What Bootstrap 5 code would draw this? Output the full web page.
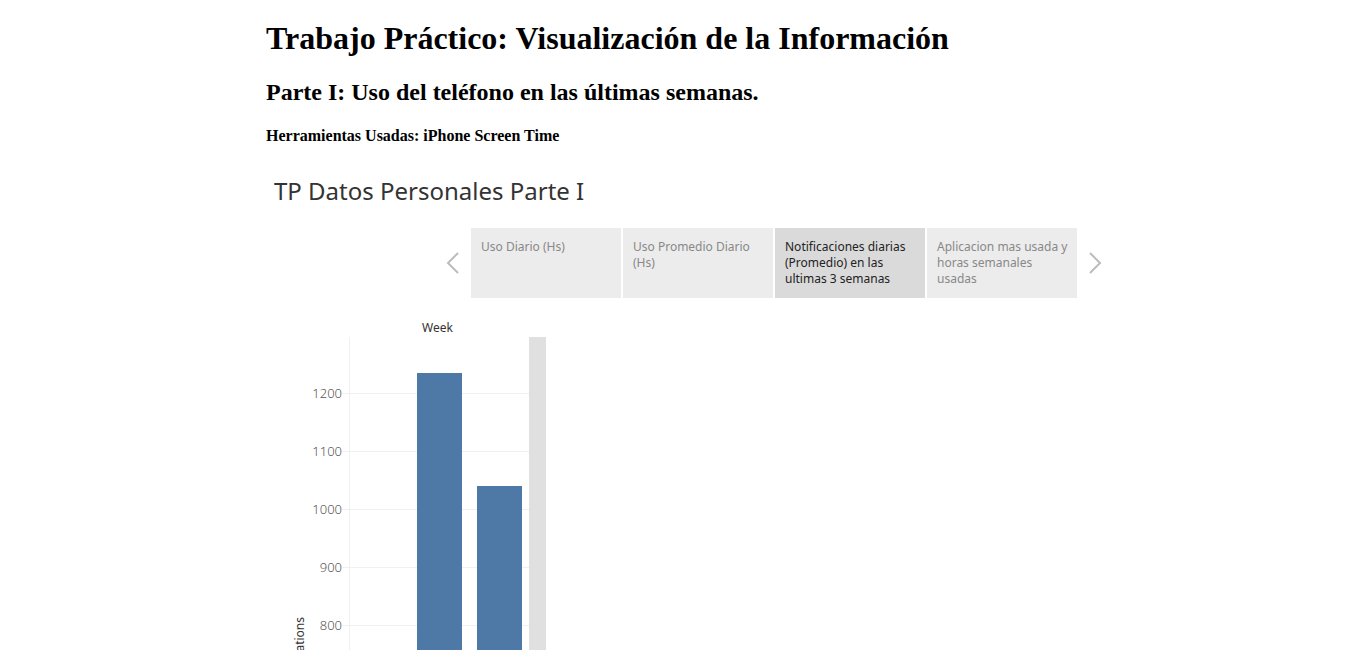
<!DOCTYPE html>
<html lang="es">
<head>
<meta charset="utf-8">
<meta name="viewport" content="width=device-width, initial-scale=1">
<title>Trabajo Práctico: Visualización de la Información</title>
<link href="https://cdn.jsdelivr.net/npm/bootstrap@5.3.0/dist/css/bootstrap.min.css" rel="stylesheet">
<style>
  body { color: #000; background: #fff; font-family: "Liberation Serif", "Times New Roman", serif; }
  .page { padding-left: 266px; padding-right: 68px; }
  .page h1 { font-size: 32px; line-height: 36px; margin: 20px 0 0; }
  .page h2 { font-size: 24px; line-height: 28px; margin: 22px 0 0; }
  .page h4 { font-size: 16px; line-height: 18px; margin: 21px 0 0; }
  .page h1, .page h2, .page h4 { font-weight: 700; }
  .viz { font-family: "Noto Sans", "Open Sans", sans-serif; font-size: 12px; line-height: 16px; color: #333; margin-top: 28px; }
  .viz-title { font-size: 24px; line-height: 36px; padding-left: 8px; }
  .story { gap: 2px; margin-top: 19px; }
  .story-point { width: 150px; height: 70px; padding: 11px 4px 0 10px; border: 0; background: #ececec; color: #888; text-align: left; line-height: 16px; }
  .story-point.active { background: #dadada; color: #222; }
  .arrow { width: 24px; padding: 0; border: 0; background: none; }
  .arrow svg { display: block; }
  .chart { width: 280px; margin-top: 21px; }
  .chart-head { line-height: 17px; padding: 0 0 1px 156px; }
  .axis-name { width: 28px; padding: 280px 0 0 10px; }
  .axis-name span { display: block; writing-mode: vertical-rl; transform: rotate(180deg); margin-left: 16px; }
  .axis-ticks { width: 48px; padding-top: 27px; color: #555; text-align: right; font-size: 13px; font-weight: 300; }
  .axis-ticks div { height: 58px; line-height: 58px; }
  .plot { width: 187px; height: 753px; padding-left: 7px; background: repeating-linear-gradient(to top, #f0f0f0 0 1px, transparent 1px 58px); }
  .bars { width: 180px; border-left: 1px solid #f0f0f0; padding-left: 7px; gap: 15px; }
  .bar { width: 45px; flex: none; background: #4e79a7; }
  .track { width: 17px; height: 753px; background: #e0e0e0; }
</style>
</head>
<body>
<main class="page vh-100 overflow-hidden d-flex flex-column">
  <h1>Trabajo Práctico: Visualización de la Información</h1>
  <h2>Parte I: Uso del teléfono en las últimas semanas.</h2>
  <h4>Herramientas Usadas: iPhone Screen Time</h4>

  <section class="viz flex-fill overflow-hidden" aria-label="TP Datos Personales Parte I">
    <div class="viz-title">TP Datos Personales Parte I</div>
    <nav class="story d-flex justify-content-center" aria-label="Historia">
      <button class="arrow" type="button" aria-label="Anterior"><svg width="16" height="24" viewBox="0 0 16 24" fill="none" stroke="#bcbcbc" stroke-width="2"><path d="M13 2 3 12l10 10"/></svg></button>
      <button class="story-point d-flex" type="button">Uso Diario (Hs)</button>
      <button class="story-point d-flex" type="button">Uso Promedio Diario (Hs)</button>
      <button class="story-point d-flex active" type="button" aria-current="true">Notificaciones diarias (Promedio) en las ultimas 3 semanas</button>
      <button class="story-point d-flex" type="button">Aplicacion mas usada y horas semanales usadas</button>
      <button class="arrow d-flex justify-content-end align-items-center" type="button" aria-label="Siguiente"><svg width="16" height="24" viewBox="0 0 16 24" fill="none" stroke="#bcbcbc" stroke-width="2"><path d="m3 2 10 10L3 22"/></svg></button>
    </nav>
    <div class="chart">
      <div class="chart-head">Week</div>
      <div class="d-flex">
        <div class="axis-name"><span>Notifications</span></div>
        <div class="axis-ticks">
          <div>1200</div><div>1100</div><div>1000</div><div>900</div><div>800</div>
        </div>
        <div class="plot d-flex">
          <div class="bars d-flex align-items-end">
            <div class="bar" style="height:0"></div>
            <div class="bar" style="height:717px"></div>
            <div class="bar" style="height:604px"></div>
          </div>
        </div>
        <div class="track"></div>
      </div>
    </div>
  </section>
</main>
<script src="https://cdn.jsdelivr.net/npm/bootstrap@5.3.0/dist/js/bootstrap.bundle.min.js"></script>
</body>
</html>
